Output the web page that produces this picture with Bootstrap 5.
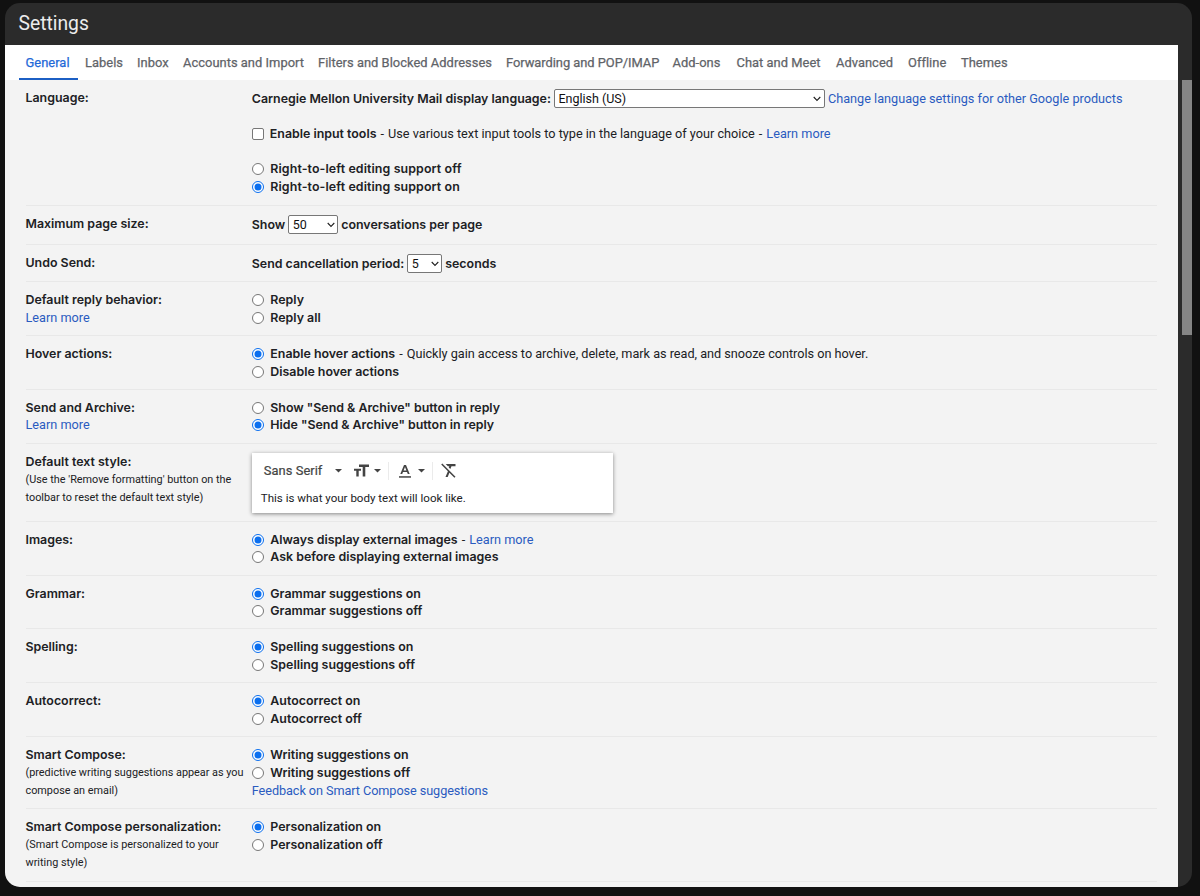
<!DOCTYPE html>
<html lang="en">
<head>
<meta charset="utf-8">
<meta name="viewport" content="width=device-width, initial-scale=1">
<title>Settings</title>
<link href="https://cdn.jsdelivr.net/npm/bootstrap@5.3.0/dist/css/bootstrap.min.css" rel="stylesheet">
<style>
  html, body { height: 100%; }
  body { background: #111; color: #202124; font-family: Roboto, "Liberation Sans", sans-serif; font-size: 12.7px; line-height: 17.7px; overflow: hidden; padding: 3px 8px 9px 4.5px; }
  .window { height: 884px; background: #2b2b2b; border-radius: 15px; overflow: hidden; }
  .title-bar { height: 42px; padding-left: 14px; color: #ececec; font-size: 19.3px; line-height: 42px; }
  .page { width: 1173.5px; height: 842px; background: #f3f3f3; }
  .settings-tabs { height: 35px; background: #fff; padding-left: 14px; }
  .settings-tabs .nav-link { flex: none; width: 59.5px; height: 35px; padding: 9px 0 0 7px; border: 0; border-radius: 0; font-size: 12.9px; line-height: 17px; letter-spacing: .03px; -webkit-text-stroke: .25px; color: #5f6368; white-space: nowrap; }
  .settings-tabs .nav-link.active { color: #1f69d8; box-shadow: inset 0 -2px #1c5fc4; }
  .settings-tabs .nav-link:nth-child(2) { width: 52px; }
  .settings-tabs .nav-link:nth-child(3) { width: 46px; }
  .settings-tabs .nav-link:nth-child(4) { width: 135px; }
  .settings-tabs .nav-link:nth-child(5) { width: 188px; }
  .settings-tabs .nav-link:nth-child(6) { width: 166.5px; letter-spacing: -.04px; }
  .settings-tabs .nav-link:nth-child(7) { width: 64px; }
  .settings-tabs .nav-link:nth-child(8) { width: 99.5px; }
  .settings-tabs .nav-link:nth-child(9) { width: 72px; }
  .settings-tabs .nav-link:nth-child(10) { width: 53px; }
  .setting { margin: 0 21.5px 0 21px; height: 53.9px; padding-top: 9px; border-bottom: 1px solid #e8e8e8; }
  .setting-name { width: 226.3px; white-space: nowrap; }
  b { font-family: Inter, "Liberation Sans", sans-serif; font-weight: 600; font-size: 12.4px; letter-spacing: 0; }
  .note { font-size: 10.85px; line-height: 18px; padding-top: .3px; }
  .dash { margin: 0 .9px; }
  a { color: #2a5bc0; text-decoration: none; }
  .form-check-input { float: none; flex: none; width: 12px; height: 12px; margin: 3px 6.5px 0 0; border: 1px solid #777; background-color: #fff; }
  .form-check-input[type=checkbox] { border-radius: 2px; margin: 4px 6px 0 0; }
  .form-check-input:checked[type=radio] { border-color: #0b6fef; background-color: #fff; background-image: url("data:image/svg+xml,%3csvg xmlns='http://www.w3.org/2000/svg' viewBox='0 0 10 10'%3e%3ccircle cx='5' cy='5' r='3.5' fill='%230b6fef'/%3e%3c/svg%3e"); }
  .form-select { flex: none; height: 19px; margin: 0 3px 0 3px; padding: 0 0 0 3.5px; border: 1px solid #777; border-radius: 2px; color: #111; font-size: 12.5px; line-height: 17px; background: #fff url("data:image/svg+xml,%3csvg xmlns='http://www.w3.org/2000/svg' viewBox='0 0 8 6'%3e%3cpath d='M.7 1l3.3 3.4L7.3 1' fill='none' stroke='%23222' stroke-width='1.1'/%3e%3c/svg%3e") no-repeat right 2.5px center / 8px 6px; }
  .inline-control > b, .inline-control > a { padding-top: 1px; }
  .h-lang { height: 126px; } .h-size { height: 39px; } .h-undo { height: 37px; } .h-style { height: 78px; } .h-compose { height: 71.6px; } .h-person { height: 73px; }
  .editor { width: 361px; height: 60px; background: #fff; box-shadow: 0 1px 4px rgba(0,0,0,.45); }
  .editor-bar { height: 36px; padding-left: 12px; color: #444; font-size: 12.9px; letter-spacing: .05px; }
  .editor-bar span { -webkit-text-stroke: .2px; }
  .editor-bar svg { flex: none; fill: #444; }
  .divider { width: 1px; height: 18px; background: #ebebeb; }
  .sample { padding-left: 9px; font-size: 11.55px; line-height: 18px; }
  .scroll-thumb { width: 10px; height: 255px; margin-top: 35px; background: #868686; }
</style>
</head>
<body>
<main class="window">
  <header class="title-bar">Settings</header>
  <div class="d-flex justify-content-between">
    <section class="page">
      <nav class="nav settings-tabs flex-nowrap">
        <a class="nav-link active" href="#">General</a>
        <a class="nav-link" href="#">Labels</a>
        <a class="nav-link" href="#">Inbox</a>
        <a class="nav-link" href="#">Accounts and Import</a>
        <a class="nav-link" href="#">Filters and Blocked Addresses</a>
        <a class="nav-link" href="#">Forwarding and POP/IMAP</a>
        <a class="nav-link" href="#">Add-ons</a>
        <a class="nav-link" href="#">Chat and Meet</a>
        <a class="nav-link" href="#">Advanced</a>
        <a class="nav-link" href="#">Offline</a>
        <a class="nav-link" href="#">Themes</a>
      </nav>

      <div class="setting d-flex h-lang">
        <div class="setting-name"><b>Language:</b></div>
        <div class="flex-grow-1">
          <div class="inline-control d-flex align-items-center"><b>Carnegie Mellon University Mail display language:</b>
            <select class="form-select" style="width:271px"><option>English (US)</option></select>
            <a href="#">Change language settings for other Google products</a></div>
          <label class="d-flex mt-3" style="margin-bottom:17.5px"><input class="form-check-input" type="checkbox"><span style="margin-top:1px"><b>Enable input tools</b> <span class="dash">-</span> Use various text input tools to type in the language of your choice <span class="dash">-</span> <a href="#">Learn more</a></span></label>
          <label class="d-flex"><input class="form-check-input" type="radio" name="rtl"><b style="letter-spacing:.11px">Right-to-left editing support off</b></label>
          <label class="d-flex"><input class="form-check-input" type="radio" name="rtl" checked><b style="letter-spacing:.11px">Right-to-left editing support on</b></label>
        </div>
      </div>

      <div class="setting d-flex h-size">
        <div class="setting-name"><b>Maximum page size:</b></div>
        <div class="inline-control d-flex align-items-center align-self-start"><b>Show</b><select class="form-select" style="width:50px"><option>50</option></select><b>conversations per page</b></div>
      </div>

      <div class="setting d-flex h-undo">
        <div class="setting-name"><b>Undo Send:</b></div>
        <div class="inline-control d-flex align-items-center align-self-start"><b>Send cancellation period:</b><select class="form-select" style="width:35px"><option>5</option></select><b>seconds</b></div>
      </div>

      <div class="setting d-flex">
        <div class="setting-name"><b>Default reply behavior:</b><br><a href="#">Learn more</a></div>
        <div>
          <label class="d-flex"><input class="form-check-input" type="radio" name="reply"><b>Reply</b></label>
          <label class="d-flex"><input class="form-check-input" type="radio" name="reply"><b>Reply all</b></label>
        </div>
      </div>

      <div class="setting d-flex">
        <div class="setting-name"><b>Hover actions:</b></div>
        <div>
          <label class="d-flex"><input class="form-check-input" type="radio" name="hover" checked><span><b>Enable hover actions</b> <span class="dash">-</span> <span style="letter-spacing:-.02px">Quickly gain access to archive, delete, mark as read, and snooze controls on hover.</span></span></label>
          <label class="d-flex"><input class="form-check-input" type="radio" name="hover"><b>Disable hover actions</b></label>
        </div>
      </div>

      <div class="setting d-flex">
        <div class="setting-name"><b>Send and Archive:</b><br><a href="#">Learn more</a></div>
        <div>
          <label class="d-flex"><input class="form-check-input" type="radio" name="archive"><b>Show "Send &amp; Archive" button in reply</b></label>
          <label class="d-flex"><input class="form-check-input" type="radio" name="archive" checked><b>Hide "Send &amp; Archive" button in reply</b></label>
        </div>
      </div>

      <div class="setting d-flex h-style">
        <div class="setting-name"><b>Default text style:</b>
          <div class="note">(Use the 'Remove formatting' button on the<br>toolbar to reset the default text style)</div></div>
        <div class="editor">
          <div class="editor-bar d-flex align-items-center">
            <span>Sans Serif</span>
            <svg style="margin-left:13px" width="7" height="4" viewBox="0 0 7 4"><path d="M0 0h7L3.500 3.600z"/></svg>
            <svg style="margin-left:12px" width="15" height="13" viewBox="0 0 15 13"><path d="M5 .5h10v2.400h-3.700V12.500H8.700V2.900H5zM0 4.700h7v2.100H4.700v5.700H2.300V6.800H0z"/></svg>
            <svg style="margin-left:5px" width="7" height="4" viewBox="0 0 7 4"><path d="M0 0h7L3.500 3.600z"/></svg>
            <i class="divider" style="margin-left:7px"></i>
            <svg style="margin-left:10px" width="12" height="14" viewBox="0 0 12 14"><path d="M0 12.200h12V13.700H0z"/><path fill-rule="evenodd" d="M5 1h2l3.700 9H8.800L8 7.900H4L3.200 10H1.300zM6 2.900L4.600 6.400h2.800z"/></svg>
            <svg style="margin-left:7px" width="7" height="4" viewBox="0 0 7 4"><path d="M0 0h7L3.500 3.600z"/></svg>
            <i class="divider" style="margin-left:7px"></i>
            <svg style="margin-left:8px" width="15" height="15" viewBox="0 0 15 15"><path d="M1.300.5L14.500 13.700l-1.100 1.100-5-5L6.700 14H4.500l2.400-5.700L.2 1.600z"/><path d="M4.700 1H14.500v2.200h-4L9.300 6.100 7.700 4.500l.6-1.300H6.900z"/></svg>
          </div>
          <div class="sample">This is what your body text will look like.</div>
        </div>
      </div>

      <div class="setting d-flex">
        <div class="setting-name"><b>Images:</b></div>
        <div>
          <label class="d-flex"><input class="form-check-input" type="radio" name="images" checked><span><b style="letter-spacing:-.03px">Always display external images</b> <span class="dash">-</span> <a href="#">Learn more</a></span></label>
          <label class="d-flex"><input class="form-check-input" type="radio" name="images"><b>Ask before displaying external images</b></label>
        </div>
      </div>

      <div class="setting d-flex">
        <div class="setting-name"><b>Grammar:</b></div>
        <div>
          <label class="d-flex"><input class="form-check-input" type="radio" name="grammar" checked><b>Grammar suggestions on</b></label>
          <label class="d-flex"><input class="form-check-input" type="radio" name="grammar"><b>Grammar suggestions off</b></label>
        </div>
      </div>

      <div class="setting d-flex">
        <div class="setting-name"><b>Spelling:</b></div>
        <div>
          <label class="d-flex"><input class="form-check-input" type="radio" name="spelling" checked><b>Spelling suggestions on</b></label>
          <label class="d-flex"><input class="form-check-input" type="radio" name="spelling"><b>Spelling suggestions off</b></label>
        </div>
      </div>

      <div class="setting d-flex">
        <div class="setting-name"><b>Autocorrect:</b></div>
        <div>
          <label class="d-flex"><input class="form-check-input" type="radio" name="autocorrect" checked><b>Autocorrect on</b></label>
          <label class="d-flex"><input class="form-check-input" type="radio" name="autocorrect"><b>Autocorrect off</b></label>
        </div>
      </div>

      <div class="setting d-flex h-compose">
        <div class="setting-name"><b>Smart Compose:</b>
          <div class="note">(predictive writing suggestions appear as you<br>compose an email)</div></div>
        <div>
          <label class="d-flex"><input class="form-check-input" type="radio" name="compose" checked><b>Writing suggestions on</b></label>
          <label class="d-flex"><input class="form-check-input" type="radio" name="compose"><b>Writing suggestions off</b></label>
          <a href="#" style="letter-spacing:-.08px">Feedback on Smart Compose suggestions</a>
        </div>
      </div>

      <div class="setting d-flex h-person">
        <div class="setting-name"><b>Smart Compose personalization:</b>
          <div class="note">(Smart Compose is personalized to your<br>writing style)</div></div>
        <div>
          <label class="d-flex"><input class="form-check-input" type="radio" name="personal" checked><b>Personalization on</b></label>
          <label class="d-flex"><input class="form-check-input" type="radio" name="personal"><b>Personalization off</b></label>
        </div>
      </div>
    </section>
    <div class="scroll-thumb"></div>
  </div>
</main>
<script src="https://cdn.jsdelivr.net/npm/bootstrap@5.3.0/dist/js/bootstrap.bundle.min.js"></script>
</body>
</html>
